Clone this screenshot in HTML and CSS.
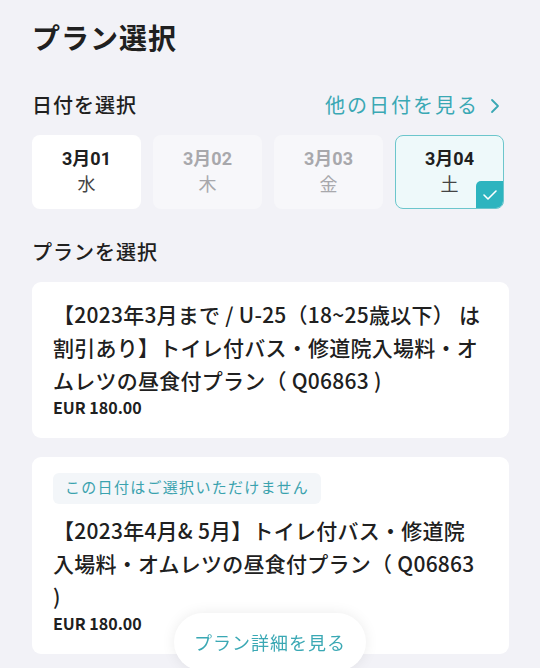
FILE: index.html
```html
<!DOCTYPE html>
<html lang="ja">
<head>
    <meta charset="UTF-8">
    <meta name="viewport" content="width=device-width, initial-scale=1.0">
    <title>プラン選択</title>
    <link rel="stylesheet" href="styles.css">
</head>
<body>
    <div class="page">
        <h1 class="page-title">プラン選択</h1>

        <div class="section-head">
            <h2 class="section-title">日付を選択</h2>
            <a class="more-link" href="#">他の日付を見る
                <svg class="chevron" width="12" height="16" viewBox="0 0 12 16"><path d="M3 2l6 6-6 6" fill="none" stroke="currentColor" stroke-width="1.8" stroke-linecap="round" stroke-linejoin="round"/></svg>
            </a>
        </div>

        <div class="dates">
            <div class="date">
                <span class="date-day">3月01</span>
                <span class="date-week">水</span>
            </div>
            <div class="date disabled">
                <span class="date-day">3月02</span>
                <span class="date-week">木</span>
            </div>
            <div class="date disabled">
                <span class="date-day">3月03</span>
                <span class="date-week">金</span>
            </div>
            <div class="date selected">
                <span class="date-day">3月04</span>
                <span class="date-week">土</span>
                <span class="check">
                    <svg width="16" height="12" viewBox="0 0 16 12"><path d="M2 6l4 4 8-8" fill="none" stroke="#fff" stroke-width="1.6" stroke-linecap="round" stroke-linejoin="round"/></svg>
                </span>
            </div>
        </div>

        <h2 class="section-title plans-title">プランを選択</h2>

        <div class="plans">
            <div class="plan">
                <p class="plan-name">【2023年3月まで / U-25（18~25歳以下） は割引あり】トイレ付バス・修道院入場料・オムレツの昼食付プラン（ Q06863 )</p>
                <p class="plan-price">EUR 180.00</p>
            </div>
            <div class="plan">
                <span class="plan-note">この日付はご選択いただけません</span>
                <p class="plan-name">【2023年4月&amp; 5月】トイレ付バス・修道院入場料・オムレツの昼食付プラン（ Q06863 )</p>
                <p class="plan-price">EUR 180.00</p>
            </div>
        </div>
    </div>

    <button class="detail-btn">プラン詳細を見る</button>
</body>
</html>
```

FILE: styles.css
```css
body {
    margin: 0;
    background: #f2f2f7;
    font-family: Roboto, "Noto Sans CJK JP", sans-serif;
    color: #202020;
}
.page {
    padding: 20px 31px 40px 32px;
}
.page-title {
    margin: 0;
    font-size: 28px;
    line-height: 40px;
    font-weight: 700;
    letter-spacing: 1px;
}
.section-head {
    display: flex;
    justify-content: space-between;
    align-items: center;
    margin-top: 32px;
}
.section-title {
    margin: 0;
    font-size: 20px;
    line-height: 28px;
    font-weight: 500;
    letter-spacing: 1px;
}
.more-link {
    display: flex;
    align-items: center;
    gap: 10px;
    padding-right: 8px;
    color: #3aa8b4;
    text-decoration: none;
    font-size: 20px;
    line-height: 28px;
    letter-spacing: 2px;
}
.dates {
    display: grid;
    grid-template-columns: repeat(4, 109px);
    gap: 12px;
    margin-top: 15px;
}
.date {
    position: relative;
    height: 74px;
    box-sizing: border-box;
    display: flex;
    flex-direction: column;
    align-items: center;
    justify-content: center;
    background: #fff;
    border-radius: 8px;
    overflow: hidden;
}
.date-day {
    font-size: 18px;
    line-height: 24px;
    font-weight: 700;
}
.date-week {
    font-size: 18px;
    line-height: 27px;
    color: #444;
}
.date.disabled { background: #f7f7fa; }
.date.disabled .date-day,
.date.disabled .date-week { color: #a8a8ac; }
.date.selected {
    background: #eef9fa;
    border: 1.5px solid #6cc6cc;
}
.check {
    position: absolute;
    right: 0;
    bottom: 0;
    width: 27px;
    height: 27px;
    display: flex;
    align-items: center;
    justify-content: center;
    background: #2db4bf;
    border-top-left-radius: 5px;
}
.plans-title {
    margin-top: 30px;
}
.plans {
    display: flex;
    flex-direction: column;
    gap: 19px;
    margin-top: 15px;
}
.plan {
    background: #fff;
    border-radius: 9px;
    padding: 16px 23px 21px 21px;
}
.plan-note {
    display: inline-block;
    margin-bottom: 10px;
    padding: 0 12px;
    background: #f3f6f9;
    border-radius: 6px;
    color: #3aa2ae;
    font-size: 15px;
    line-height: 31px;
    letter-spacing: 1.3px;
}
.plan-name {
    margin: 0;
    font-family: "Noto Sans CJK JP", sans-serif;
    font-size: 21px;
    line-height: 33px;
    font-weight: 500;
    letter-spacing: 0.25px;
}
.plan-price {
    margin: 0;
    font-family: "Noto Sans CJK JP", sans-serif;
    font-size: 16px;
    line-height: 20px;
    font-weight: 700;
}
.detail-btn {
    position: fixed;
    left: 50%;
    bottom: -3px;
    transform: translateX(-50%);
    width: 192px;
    height: 58px;
    border: none;
    border-radius: 29px;
    background: #fff;
    box-shadow: 0 0 14px rgba(0, 0, 0, 0.08);
    color: #3aa8b4;
    font-family: Roboto, "Noto Sans CJK JP", sans-serif;
    font-size: 18px;
    letter-spacing: 1px;
    cursor: pointer;
}
```
